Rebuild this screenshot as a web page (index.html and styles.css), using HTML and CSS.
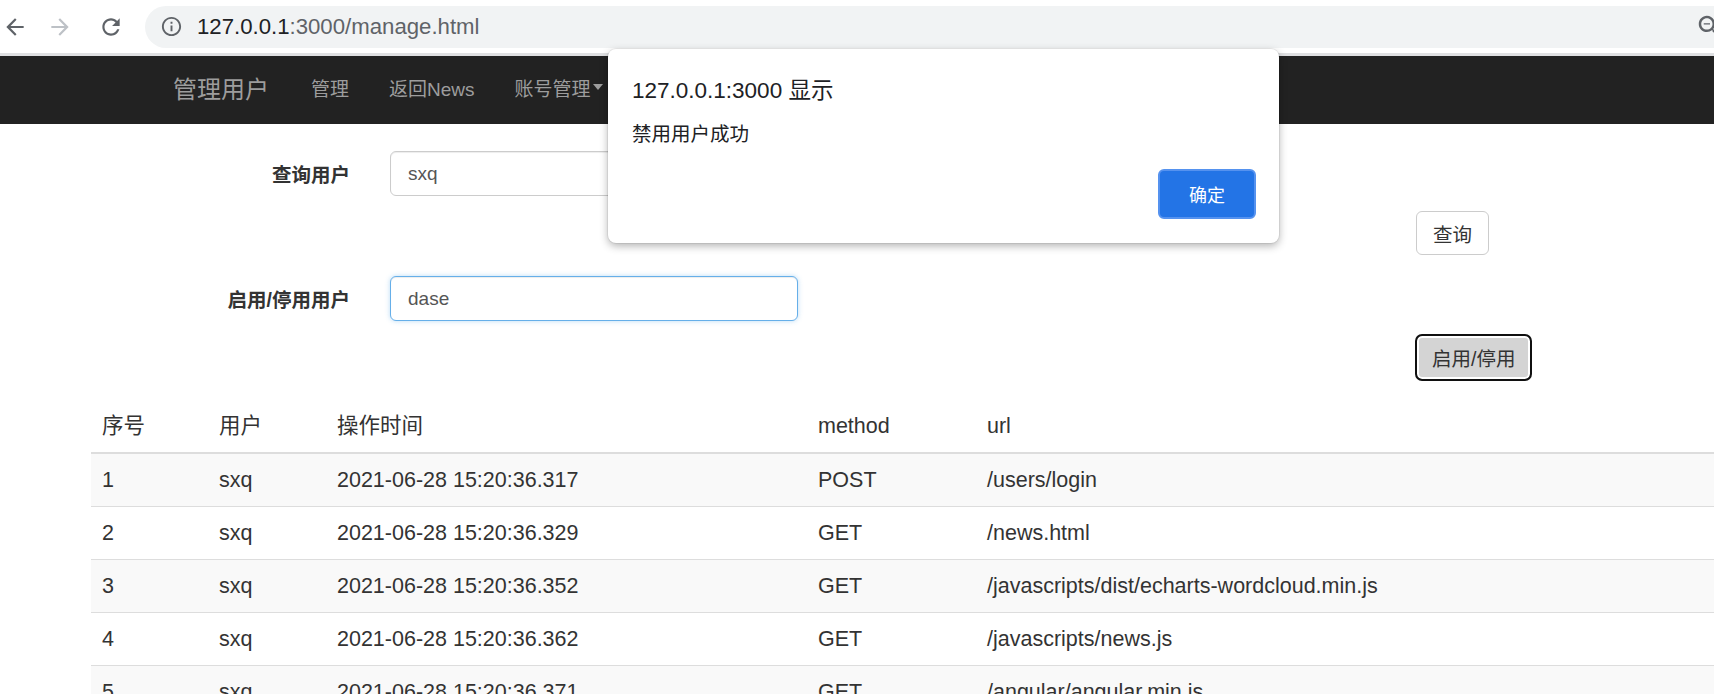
FILE: index.html
```html
<!DOCTYPE html>
<html lang="zh-CN">
<head>
<meta charset="utf-8">
<title>manage</title>
<link rel="stylesheet" href="styles.css">
</head>
<body>
<header class="chrome">
  <svg class="ic ic-back" viewBox="0 0 24 24"><path d="M20 11H7.83l5.59-5.59L12 4l-8 8 8 8 1.41-1.41L7.83 13H20v-2z"/></svg>
  <svg class="ic ic-fwd" viewBox="0 0 24 24"><path d="M4 11h12.17l-5.59-5.59L12 4l8 8-8 8-1.41-1.41L16.17 13H4v-2z"/></svg>
  <svg class="ic ic-reload" viewBox="0 0 24 24"><path d="M17.65 6.35C16.2 4.9 14.21 4 12 4c-4.42 0-7.99 3.58-7.99 8s3.57 8 7.99 8c3.73 0 6.84-2.55 7.73-6h-2.08c-.82 2.33-3.04 4-5.65 4-3.31 0-6-2.69-6-6s2.69-6 6-6c1.66 0 3.14.69 4.22 1.78L13 11h7V4l-2.35 2.35z"/></svg>
  <div class="omnibox">
    <svg class="ic ic-info" viewBox="0 0 24 24"><path d="M11 7h2v2h-2zm0 4h2v6h-2zm1-9C6.48 2 2 6.48 2 12s4.48 10 10 10 10-4.48 10-10S17.52 2 12 2zm0 18c-4.41 0-8-3.590-8-8s3.59-8 8-8 8 3.59 8 8-3.59 8-8 8z"/></svg>
    <span class="url"><span class="host">127.0.0.1</span>:3000/manage.html</span>
    <svg class="ic ic-zoom" viewBox="0 0 24 24"><path d="M15.5 14h-.79l-.28-.27C15.41 12.59 16 11.11 16 9.5 16 5.91 13.09 3 9.5 3S3 5.91 3 9.5 5.91 16 9.5 16c1.61 0 3.09-.59 4.23-1.57l.27.28v.79l5 4.99L20.49 19l-4.99-5zm-6 0C7.01 14 5 11.99 5 9.5S7.01 5 9.5 5 14 7.01 14 9.5 11.99 14 9.5 14zM7 9h5v1H7z"/></svg>
  </div>
</header>

<nav class="navbar">
  <span class="brand">管理用户</span>
  <a class="navlink">管理</a>
  <a class="navlink">返回News</a>
  <a class="navlink">账号管理<span class="caret"></span></a>
</nav>

<main class="content">
  <div class="form">
    <label class="flabel r1">查询用户</label>
    <input class="finput r1" type="text" value="sxq">
    <button class="btn r2">查询</button>
    <label class="flabel r3">启用/停用用户</label>
    <input class="finput finput-focus r3" type="text" value="dase">
    <button class="btn btn-active r4">启用/停用</button>
  </div>

  <table class="table">
    <colgroup>
      <col class="c1"><col class="c2"><col class="c3"><col class="c4"><col class="c5">
    </colgroup>
    <thead>
      <tr><th>序号</th><th>用户</th><th>操作时间</th><th>method</th><th>url</th></tr>
    </thead>
    <tbody>
      <tr><td>1</td><td>sxq</td><td>2021-06-28 15:20:36.317</td><td>POST</td><td>/users/login</td></tr>
      <tr><td>2</td><td>sxq</td><td>2021-06-28 15:20:36.329</td><td>GET</td><td>/news.html</td></tr>
      <tr><td>3</td><td>sxq</td><td>2021-06-28 15:20:36.352</td><td>GET</td><td>/javascripts/dist/echarts-wordcloud.min.js</td></tr>
      <tr><td>4</td><td>sxq</td><td>2021-06-28 15:20:36.362</td><td>GET</td><td>/javascripts/news.js</td></tr>
      <tr><td>5</td><td>sxq</td><td>2021-06-28 15:20:36.371</td><td>GET</td><td>/angular/angular.min.js</td></tr>
    </tbody>
  </table>
</main>

<div class="dialog">
  <div class="dtitle">127.0.0.1:3000 显示</div>
  <div class="dmsg">禁用用户成功</div>
  <div class="dactions"><button class="dbtn">确定</button></div>
</div>
</body>
</html>
```

FILE: styles.css
```css
html, body {
  margin: 0;
  padding: 0;
  overflow: hidden;
  background: #fff;
}
body {
  width: 1714px;
  height: 694px;
  position: relative;
  font-family: "Liberation Sans", Arial, "Noto Sans CJK SC", sans-serif;
  color: #333;
}

/* browser chrome */
.chrome {
  height: 53px;
  display: flex;
  align-items: center;
  background: #fff;
  border-bottom: 3px solid #dfe0e2;
  white-space: nowrap;
}
.ic {
  width: 26px;
  height: 26px;
  flex: none;
  fill: #5f6368;
}
.ic-back { margin-left: 2px; }
.ic-fwd { margin-left: 19px; fill: #bdc1c6; }
.ic-reload { margin-left: 25px; }
.omnibox {
  flex: none;
  width: 1600px;
  height: 42px;
  margin-left: 21px;
  border-radius: 21px;
  background: #f1f3f4;
  display: flex;
  align-items: center;
}
.ic-info {
  width: 23px;
  height: 23px;
  margin-left: 15px;
}
.url {
  margin-left: 14px;
  font-size: 22.2px;
  color: #5f6368;
  flex: 1;
}
.host { color: #202124; }
.ic-zoom {
  width: 30px;
  height: 30px;
  margin-right: 20px;
}

/* navbar */
.navbar {
  height: 68px;
  box-sizing: border-box;
  padding-bottom: 6px;
  background: #222;
  display: flex;
  align-items: center;
  padding-left: 173px;
  white-space: nowrap;
}
.brand {
  font-size: 24px;
  color: #9d9d9d;
  margin-right: 42px;
}
.navlink {
  font-size: 19px;
  color: #9d9d9d;
  margin-right: 40px;
  display: flex;
  align-items: center;
}
.caret {
  display: inline-block;
  width: 0;
  height: 0;
  margin-left: 2px;
  border-top: 6px solid #9d9d9d;
  border-left: 5px solid transparent;
  border-right: 5px solid transparent;
}

/* form */
.content {
  padding-top: 27px;
}
.form {
  display: grid;
  grid-template-columns: 350px 40px 1026px auto 1fr;
}
.flabel {
  grid-column: 1;
  text-align: right;
  font-size: 19.5px;
  font-weight: bold;
  color: #333;
  align-self: center;
}
.finput {
  grid-column: 3;
  width: 408px;
  height: 45px;
  box-sizing: border-box;
  border: 1px solid #ccc;
  border-radius: 6px;
  padding: 0 17px;
  font-family: "Liberation Sans", Arial, "Noto Sans CJK SC", sans-serif;
  font-size: 19px;
  color: #555;
  background: #fff;
  box-shadow: inset 0 1px 1px rgba(0,0,0,.075);
  outline: none;
}
.finput-focus {
  border-color: #66afe9;
  box-shadow: inset 0 1px 1px rgba(0,0,0,.075), 0 0 5px rgba(102,175,233,.45);
}
.r1 { grid-row: 1; }
.r2 { grid-row: 2; margin-top: 15px; }
.r3 { grid-row: 3; margin-top: 21px; }
.r4 { grid-row: 4; margin-top: 14px; }
.btn {
  grid-column: 4;
  justify-self: start;
  font-family: "Liberation Sans", Arial, "Noto Sans CJK SC", sans-serif;
  font-size: 19.5px;
  color: #333;
  background: #fff;
  border: 1px solid #ccc;
  border-radius: 6px;
  height: 44px;
  padding: 0 16px;
}
.btn-active {
  height: 45px;
  padding: 0 15px;
  background: #d4d4d4;
  border: 1px solid #8c8c8c;
  outline: 2px solid #101010;
  outline-offset: -1px;
  box-shadow: inset 0 0 0 2px #fff;
}

/* table */
.table {
  margin-top: 20px;
  margin-left: 91px;
  width: 1680px;
  border-collapse: collapse;
  table-layout: fixed;
  font-size: 21.5px;
  color: #333;
}
.c1 { width: 117px; }
.c2 { width: 118px; }
.c3 { width: 481px; }
.c4 { width: 169px; }
.table th, .table td {
  text-align: left;
  font-weight: normal;
  padding: 11px 11px;
  line-height: 30px;
  white-space: nowrap;
}
.table th {
  border-bottom: 2px solid #ddd;
}
.table td {
  border-top: 1px solid #ddd;
}
.table tbody tr:nth-child(odd) td {
  background: #f9f9f9;
}

/* alert dialog */
.dialog {
  position: absolute;
  left: 608px;
  top: 49px;
  width: 671px;
  height: 194px;
  box-sizing: border-box;
  padding: 28px 23px 24px 24px;
  background: #fff;
  border-radius: 8px;
  box-shadow: 0 0 0 1px rgba(0,0,0,.06), 0 3px 8px rgba(0,0,0,.3);
  font-family: "Liberation Sans", Arial, "Noto Sans CJK SC", sans-serif;
  color: #202124;
}
.dtitle {
  font-size: 22.5px;
  line-height: 28px;
}
.dmsg {
  margin-top: 16px;
  font-size: 19.5px;
  line-height: 26px;
}
.dactions {
  margin-top: 22px;
  display: flex;
  justify-content: flex-end;
}
.dbtn {
  width: 98px;
  height: 50px;
  border-radius: 6px;
  background: #2374e6;
  border: 2px solid #5592ef;
  color: #fff;
  font-family: "Liberation Sans", Arial, "Noto Sans CJK SC", sans-serif;
  font-size: 18px;
}
```
